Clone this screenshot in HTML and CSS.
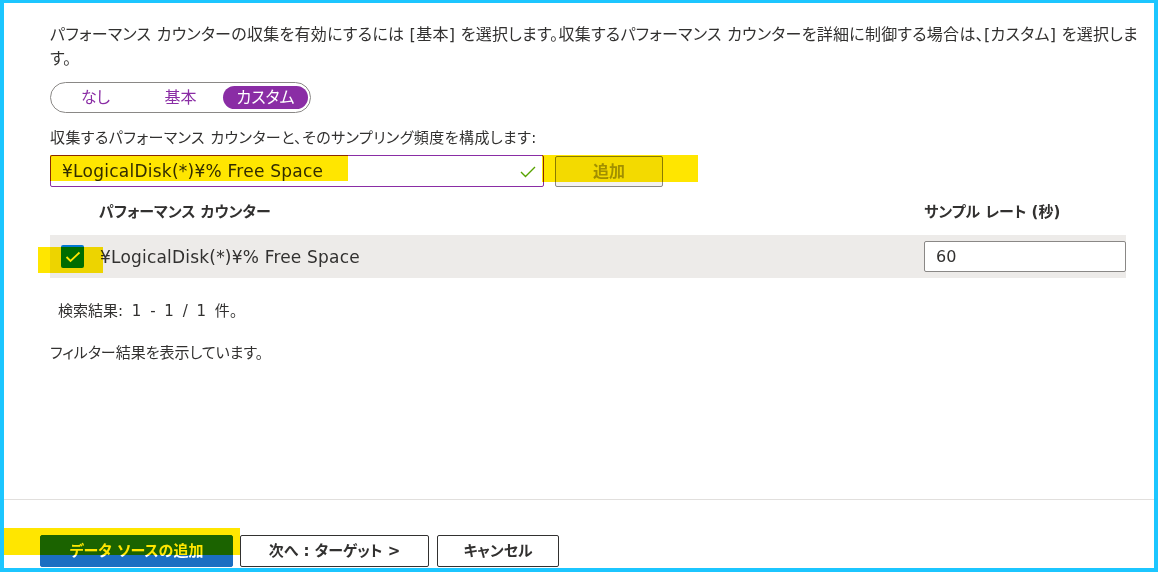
FILE: index.html
```html
<!DOCTYPE html>
<html lang="ja">
<head>
<meta charset="utf-8">
<title>パフォーマンス カウンター</title>
<link rel="stylesheet" href="styles.css">
</head>
<body>
<div class="frame">
  <main class="content">
    <p class="intro">パフォーマンス カウンターの収集を有効にするには [基本] を選択します。収集するパフォーマンス カウンターを詳細に制御する場合は、[カスタム] を選択します。</p>
    <div class="toggle">
      <span class="seg">なし</span>
      <span class="seg">基本</span>
      <span class="seg on">カスタム</span>
    </div>
    <p class="label">収集するパフォーマンス カウンターと、そのサンプリング頻度を構成します:</p>
    <div class="add-row">
      <div class="input">
        <span class="val">¥LogicalDisk(*)¥% Free Space</span>
        <svg class="ok" width="16" height="12" viewBox="0 0 16 12"><polyline points="1,6 5.5,10.5 15,1" fill="none" stroke="#57a300" stroke-width="1.4"/></svg>
      </div>
      <span class="add">追加</span>
    </div>
    <div class="thead">
      <span class="th-name">パフォーマンス カウンター</span>
      <span class="th-rate">サンプル レート (秒)</span>
    </div>
    <div class="trow">
      <span class="cb"><svg width="16" height="12" viewBox="0 0 16 12"><polyline points="1.5,6 5.5,10 14.5,1.5" fill="none" stroke="#fff" stroke-width="1.8"/></svg></span>
      <span class="name">¥LogicalDisk(*)¥% Free Space</span>
      <span class="rate">60</span>
    </div>
    <p class="results">検索結果: 1 - 1 / 1 件。</p>
    <p class="filter">フィルター結果を表示しています。</p>
  </main>
  <footer class="footer">
    <span class="btn primary">データ ソースの追加</span>
    <span class="btn next">次へ : ターゲット &gt;</span>
    <span class="btn cancel">キャンセル</span>
  </footer>
  <span class="hl hl-input"></span>
  <span class="hl hl-add"></span>
  <span class="hl hl-cb"></span>
  <span class="hl hl-primary"></span>
</div>
</body>
</html>
```
FILE: styles.css
```css
* { box-sizing: border-box; }
html, body { margin: 0; padding: 0; background: #fff; }
body {
  font-family: "DejaVu Sans", "Noto Sans CJK JP", sans-serif;
  font-feature-settings: "palt";
  color: #323130;
  font-size: 16px;
}
.frame {
  position: relative;
  width: 1158px;
  height: 572px;
  border: 4px solid #1cc6ff;
  border-top-width: 3px;
  display: flex;
  flex-direction: column;
  overflow: hidden;
}
.content {
  flex: 1;
  padding: 20px 0 0 46px;
}
p { margin: 0; }
.intro {
  width: 1100px;
  line-height: 24px;
  letter-spacing: 0.28px;
}
.toggle {
  margin-top: 11px;
  display: inline-flex;
  border: 1px solid #8a8886;
  border-radius: 16px;
  padding: 3px 2px;
  height: 31px;
}
.seg {
  width: 85px;
  height: 23px;
  line-height: 23px;
  text-align: center;
  color: #8a2da5;
  border-radius: 12px;
}
.seg.on { background: #8a2da5; color: #fff; }
.label {
  margin-top: 15px;
  line-height: 20px;
  font-size: 15px;
  letter-spacing: 0.45px;
}
.add-row {
  margin-top: 7px;
  display: flex;
  gap: 11px;
}
.input {
  width: 494px;
  height: 32px;
  border: 1px solid #8a2da5;
  border-radius: 2px;
  display: flex;
  align-items: center;
  justify-content: space-between;
  padding: 0 7px 0 11px;
  font-size: 17px;
  letter-spacing: 0.25px;
}
.ok { display: block; margin-top: 2px; }
.add {
  width: 108px;
  height: 31px;
  margin-top: 1px;
  border: 1px solid #8a8886;
  border-radius: 2px;
  background: #f3f2f1;
  color: #a19f9d;
  font-weight: bold;
  text-align: center;
  line-height: 29px;
}
.thead {
  margin-top: 15px;
  width: 1076px;
  display: flex;
  justify-content: space-between;
  font-weight: bold;
  line-height: 20px;
  font-size: 15px;
}
.th-name { margin-left: 49px; }
.th-rate { width: 202px; }
.trow {
  margin-top: 13px;
  width: 1076px;
  height: 43px;
  background: #edebe9;
  display: flex;
  align-items: center;
  padding-left: 11px;
}
.cb {
  width: 23px;
  height: 23px;
  border-radius: 2px;
  background: #0078d4;
  display: flex;
  align-items: center;
  justify-content: center;
}
.name {
  margin-left: 16px;
  font-size: 17px;
  letter-spacing: 0.2px;
}
.rate {
  margin-left: auto;
  width: 202px;
  height: 31px;
  background: #fff;
  border: 1px solid #8a8886;
  border-radius: 2px;
  padding-left: 11px;
  line-height: 29px;
  align-self: flex-start;
  margin-top: 6px;
}
.results {
  margin-top: 23px;
  margin-left: 8px;
  line-height: 20px;
  font-size: 15px;
  word-spacing: 4px;
}
.filter {
  margin-top: 22px;
  line-height: 20px;
  font-size: 15px;
}
.footer {
  height: 69px;
  border-top: 1px solid #e1dfdd;
  padding: 35px 0 0 36px;
  display: flex;
  gap: 7px;
}
.btn {
  height: 32px;
  border-radius: 2px;
  font-weight: bold;
  font-size: 15px;
  text-align: center;
  line-height: 30px;
  border: 1px solid #323130;
  background: #fff;
  color: #323130;
}
.primary { width: 193px; background: #1b6ec2; border-color: #1b6ec2; color: #fff; }
.next { width: 189px; }
.cancel { width: 122px; margin-left: 1px; }
.hl {
  position: absolute;
  background: #ffe600;
  mix-blend-mode: multiply;
}
.hl-input { left: 46px; top: 152px; width: 298px; height: 26px; }
.hl-add { left: 538px; top: 152px; width: 156px; height: 27px; }
.hl-cb { left: 34px; top: 244px; width: 65px; height: 26px; }
.hl-primary { left: -4px; top: 525px; width: 240px; height: 27px; }
```
